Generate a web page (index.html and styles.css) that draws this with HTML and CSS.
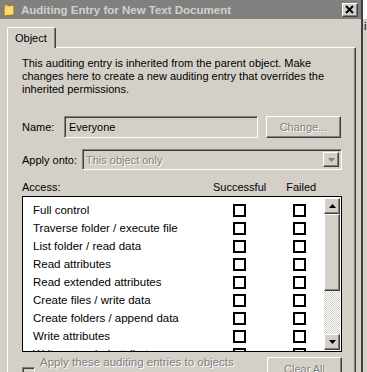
FILE: index.html
```html
<!DOCTYPE html>
<html>
<head>
	<title>Auditing Entry for New Text Document</title>
	<link rel="stylesheet" href="styles.css">
</head>
<body>
	<div class="screen">
		<div class="window">
			<div class="titlebar">
				<svg class="folder" width="12" height="14" viewBox="0 0 12 14">
					<path d="M1 2 L5 1 L5 3 L11 2 L11 12 L1 13 Z" fill="#e8c24a" stroke="#a07a18" stroke-width="1"/>
					<path d="M2 4 L10 3 L10 11 L2 12 Z" fill="#f4dc7c"/>
				</svg>
				<span class="title">Auditing Entry for New Text Document</span>
				<div class="close">
					<svg width="10" height="9" viewBox="0 0 10 9">
						<path d="M1 1 L8 8 M8 1 L1 8" stroke="#000" stroke-width="2"/>
					</svg>
				</div>
			</div>

			<div class="tabs">
				<div class="tab">Object</div>
			</div>

			<div class="panel">
				<p class="intro">This auditing entry is inherited from the parent object. Make changes here to create a new auditing entry that overrides the inherited permissions.</p>

				<div class="row name-row">
					<span class="label">Name:</span>
					<div class="field name-field">Everyone</div>
					<div class="button disabled change">Change...</div>
				</div>

				<div class="row apply-row">
					<span class="label">Apply onto:</span>
					<div class="field combo">
						<span class="disabled-text">This object only</span>
						<div class="drop">
							<svg width="7" height="4" viewBox="0 0 7 4"><path d="M0 0 H7 L3.5 4 Z" fill="#808080"/></svg>
						</div>
					</div>
				</div>

				<div class="access-head">
					<span class="label">Access:</span>
					<span class="col-success">Successful</span>
					<span class="col-failed">Failed</span>
				</div>

				<div class="listbox">
					<div class="items">
						<div class="item"><span>Full control</span><i class="check s"></i><i class="check f"></i></div>
						<div class="item"><span>Traverse folder / execute file</span><i class="check s"></i><i class="check f"></i></div>
						<div class="item"><span>List folder / read data</span><i class="check s"></i><i class="check f"></i></div>
						<div class="item"><span>Read attributes</span><i class="check s"></i><i class="check f"></i></div>
						<div class="item"><span>Read extended attributes</span><i class="check s"></i><i class="check f"></i></div>
						<div class="item"><span>Create files / write data</span><i class="check s"></i><i class="check f"></i></div>
						<div class="item"><span>Create folders / append data</span><i class="check s"></i><i class="check f"></i></div>
						<div class="item"><span>Write attributes</span><i class="check s"></i><i class="check f"></i></div>
						<div class="item"><span>Write extended attributes</span><i class="check s"></i><i class="check f"></i></div>
					</div>
					<div class="scrollbar">
						<div class="sbtn"><svg width="7" height="4" viewBox="0 0 7 4"><path d="M0 4 H7 L3.5 0 Z" fill="#000"/></svg></div>
						<div class="thumb"></div>
						<div class="track"></div>
						<div class="sbtn"><svg width="7" height="4" viewBox="0 0 7 4"><path d="M0 0 H7 L3.5 4 Z" fill="#000"/></svg></div>
					</div>
				</div>

				<div class="bottom">
					<div class="apply-check">
						<i class="small-box"></i>
						<span class="disabled-text">Apply these auditing entries to objects</span>
					</div>
					<div class="button disabled clear">Clear All</div>
				</div>
			</div>
		</div>
		<div class="edge"><span>i</span></div>
	</div>
</body>
</html>
```

FILE: styles.css
```css
body {
	margin: 0;
	background: #d4d0c8;
	font-family: "Liberation Sans", Arial, sans-serif;
	font-size: 11px;
	color: #000;
	overflow: hidden;
}

.screen {
	display: flex;
	width: 367px;
	height: 372px;
	overflow: hidden;
}

.window {
	width: 361px;
	flex: none;
}

.edge {
	flex: 1;
	border-left: 2px solid #404040;
	background: linear-gradient(#fff 0 19px, #d4d0c8 19px);
	padding-top: 20px;
	padding-left: 1px;
}

.titlebar {
	height: 19px;
	background: #808080;
	display: flex;
	align-items: center;
	padding-left: 3px;
	padding-right: 3px;
}

.folder {
	margin-right: 6px;
}

.title {
	color: #d4d0c8;
	font-weight: bold;
	font-size: 11.5px;
	flex: 1;
	white-space: nowrap;
}

.close {
	width: 14px;
	height: 12px;
	background: #d4d0c8;
	border-top: 1px solid #fff;
	border-left: 1px solid #fff;
	border-right: 1px solid #404040;
	border-bottom: 1px solid #404040;
	box-shadow: inset -1px -1px #808080;
	display: flex;
	align-items: center;
	justify-content: center;
}

.tabs {
	padding: 8px 0 0 7px;
	display: flex;
	height: 20px;
}

.tab {
	border-top: 1px solid #fff;
	border-left: 1px solid #fff;
	border-right: 1px solid #404040;
	box-shadow: inset -1px 0 #808080;
	border-radius: 2px 2px 0 0;
	padding: 4px 8px 0 7px;
	height: 16px;
	position: relative;
	z-index: 1;
	background: #d4d0c8;
	margin-bottom: -1px;
}

.panel {
	margin-left: 7px;
	width: 349px;
	height: 340px;
	border-top: 1px solid #fff;
	border-left: 1px solid #fff;
	border-right: 1px solid #404040;
	box-shadow: inset -1px 0 #808080;
	padding: 9px 0 0 14px;
	box-sizing: border-box;
}

.intro {
	margin: 0;
	width: 318px;
	line-height: 13px;
}

.row {
	display: flex;
	align-items: center;
}

.label {
	white-space: nowrap;
}

.name-row {
	margin-top: 20px;
	height: 22px;
}

.name-row .label {
	width: 42px;
}

.field {
	box-sizing: border-box;
	border-top: 1px solid #808080;
	border-left: 1px solid #808080;
	border-right: 1px solid #fff;
	border-bottom: 1px solid #fff;
	box-shadow: inset 1px 1px #404040, inset -1px -1px #d4d0c8;
	height: 22px;
	display: flex;
	align-items: center;
	padding-left: 4px;
}

.name-field {
	width: 194px;
}

.button {
	box-sizing: border-box;
	border-top: 1px solid #fff;
	border-left: 1px solid #fff;
	border-right: 1px solid #404040;
	border-bottom: 1px solid #404040;
	box-shadow: inset -1px -1px #808080;
	display: flex;
	align-items: center;
	justify-content: center;
	height: 22px;
}

.disabled, .disabled-text {
	color: #808080;
	text-shadow: 1px 1px #fff;
}

.change {
	width: 75px;
	margin-left: 8px;
}

.apply-row {
	margin-top: 11px;
}

.apply-row .label {
	width: 60px;
}

.combo {
	width: 260px;
	height: 21px;
	justify-content: space-between;
	padding-left: 3px;
	padding-right: 2px;
}

.drop {
	width: 16px;
	height: 15px;
	box-sizing: border-box;
	border-top: 1px solid #fff;
	border-left: 1px solid #fff;
	border-right: 1px solid #404040;
	border-bottom: 1px solid #404040;
	box-shadow: inset -1px -1px #808080;
	display: flex;
	align-items: center;
	justify-content: center;
}

.access-head {
	display: flex;
	margin-top: 11px;
	height: 15px;
}

.access-head .label {
	width: 191px;
}

.col-failed {
	margin-left: 20px;
}

.listbox {
	width: 320px;
	height: 156px;
	box-sizing: border-box;
	border: 1px solid #000;
	background: #fff;
	display: flex;
	overflow: hidden;
}

.items {
	flex: 1;
	padding-top: 4px;
	height: 154px;
	box-sizing: border-box;
	overflow: hidden;
}

.item {
	height: 18px;
	display: flex;
	align-items: center;
	padding-left: 10px;
	white-space: nowrap;
	font-size: 11.5px;
}

.item span {
	width: 200px;
}

.check {
	width: 13px;
	height: 13px;
	box-sizing: border-box;
	border: 2px solid #000;
	flex: none;
}

.check.f {
	margin-left: 47px;
}

.scrollbar {
	width: 16px;
	display: flex;
	flex-direction: column;
	padding: 1px 1px 1px 0;
}

.sbtn, .thumb {
	box-sizing: border-box;
	background: #d4d0c8;
	border-top: 1px solid #fff;
	border-left: 1px solid #fff;
	border-right: 1px solid #404040;
	border-bottom: 1px solid #404040;
	box-shadow: inset -1px -1px #808080;
}

.sbtn {
	height: 16px;
	display: flex;
	align-items: center;
	justify-content: center;
}

.thumb {
	height: 77px;
}

.track {
	flex: 1;
	background-color: #fff;
	background-image: repeating-conic-gradient(#d4d0c8 0 25%, #fff 0 50%);
	background-size: 2px 2px;
}

.bottom {
	display: flex;
	justify-content: space-between;
	margin-top: 3px;
	width: 320px;
}

.apply-check {
	position: relative;
	padding-left: 18px;
	line-height: 14px;
	font-size: 11.5px;
}

.small-box {
	position: absolute;
	left: 0;
	top: 12px;
	width: 13px;
	height: 13px;
	box-sizing: border-box;
	border-top: 1px solid #808080;
	border-left: 1px solid #808080;
	border-right: 1px solid #fff;
	border-bottom: 1px solid #fff;
	box-shadow: inset 1px 1px #404040;
	background: #d4d0c8;
}

.clear {
	width: 75px;
	height: 23px;
	margin-top: 2px;
}
```
